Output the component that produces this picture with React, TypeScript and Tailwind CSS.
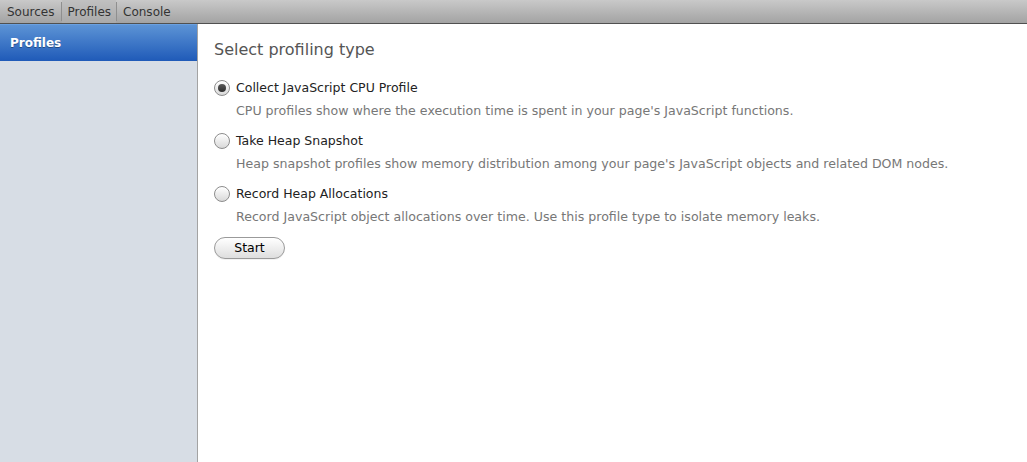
import React from 'react';

const font = { fontFamily: '"DejaVu Sans", "Lucida Grande", sans-serif' };

function Radio({ checked }: { checked?: boolean }) {
  return (
    <span className="w-[16px] h-[16px] rounded-full border border-[#8c8c8c] bg-gradient-to-b from-[#ffffff] to-[#d9d9d9] flex items-center justify-center shadow-[inset_0_1px_1px_rgba(255,255,255,0.9)] shrink-0">
      {checked && <span className="w-[8px] h-[8px] rounded-full bg-gradient-to-b from-[#5a5a5a] to-[#2e2e2e]" />}
    </span>
  );
}

const options = [
  {
    title: 'Collect JavaScript CPU Profile',
    desc: "CPU profiles show where the execution time is spent in your page's JavaScript functions.",
    checked: true,
  },
  {
    title: 'Take Heap Snapshot',
    desc: "Heap snapshot profiles show memory distribution among your page's JavaScript objects and related DOM nodes.",
  },
  {
    title: 'Record Heap Allocations',
    desc: 'Record JavaScript object allocations over time. Use this profile type to isolate memory leaks.',
  },
];

export default function App() {
  return (
    <div className="w-[1027px] h-[462px] flex flex-col bg-white overflow-hidden" style={font}>
      {/* toolbar */}
      <div className="h-[24px] flex items-stretch bg-gradient-to-b from-[#c9c9c9] to-[#a3a3a3] border-b border-[#505050] text-[12px] text-[#333]">
        <div className="px-[7px] flex items-center">Sources</div>
        <div className="w-px bg-[#8f8f8f] my-[2px]" />
        <div className="px-[5px] flex items-center bg-[#b4b4b4]/40">Profiles</div>
        <div className="w-px bg-[#8f8f8f] my-[2px]" />
        <div className="px-[6px] flex items-center">Console</div>
      </div>

      <div className="flex flex-1 min-h-0">
        {/* sidebar */}
        <div className="w-[198px] shrink-0 bg-[#d7dde5] border-r border-[#a3a3a3]">
          <div className="h-[37px] bg-gradient-to-b from-[#5c93d5] to-[#1f5ab8] border-t border-[#6aa0e0] flex items-center px-[10px] text-[12px] font-bold text-white [text-shadow:0_1px_0_rgba(0,0,0,0.35)]">
            Profiles
          </div>
        </div>

        {/* main */}
        <div className="flex-1 pl-[16px] pt-[16px]">
          <div className="text-[16px] text-[#555] leading-[20px]">Select profiling type</div>
          <div className="mt-[19px] flex flex-col gap-[13px]">
            {options.map((o) => (
              <div key={o.title} className="flex flex-col">
                <div className="flex items-center gap-[6px] h-[18px]">
                  <Radio checked={o.checked} />
                  <span className="text-[12.5px] text-[#222]">{o.title}</span>
                </div>
                <div className="pl-[22px] mt-[6px] text-[12.6px] text-[#777] leading-[16px] whitespace-nowrap">{o.desc}</div>
              </div>
            ))}
          </div>
          <button className="mt-[12px] w-[71px] h-[22px] rounded-full border border-[#9a9a9a] bg-gradient-to-b from-[#ffffff] to-[#dedede] text-[12.5px] text-[#000] font-medium shadow-[0_1px_0_rgba(0,0,0,0.05)]">
            Start
          </button>
        </div>
      </div>
    </div>
  );
}
